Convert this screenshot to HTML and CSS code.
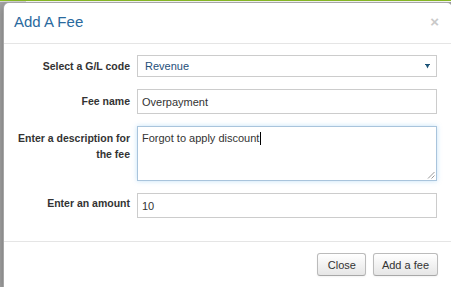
FILE: index.html
```html
<!DOCTYPE html>
<html>
<head>
<meta charset="utf-8">
<link rel="stylesheet" href="styles.css">
</head>
<body>
<div class="page">
  <div class="bg-top"></div>
  <div class="modal">
    <div class="modal-header">
      <h4 class="modal-title">Add A Fee</h4>
      <span class="close">×</span>
    </div>
    <div class="modal-body">
      <label class="lbl lbl-select">Select a G/L code</label>
      <div class="select">
        <span class="select-text">Revenue</span>
        <svg class="caret" width="5" height="5" viewBox="0 0 5 5"><path d="M0 0H5V1H4.2L2.5 4.5L0.8 1H0Z" fill="#1d5478"/></svg>
      </div>
      <label class="lbl">Fee name</label>
      <input class="input" type="text" value="Overpayment">
      <label class="lbl">Enter a description for the fee</label>
      <div class="textarea"><span>Forgot to apply discount</span><span class="cursor"></span>
        <svg class="grip" width="8" height="8" viewBox="0 0 8 8"><path d="M7.5 1L1 7.5M7.5 4.5L4.5 7.5" stroke="#999" stroke-width="1" fill="none"/></svg>
      </div>
      <label class="lbl lbl-amount">Enter an amount</label>
      <input class="input" type="text" value="10">
    </div>
    <div class="modal-footer">
      <button class="btn btn-close">Close</button>
      <button class="btn">Add a fee</button>
    </div>
  </div>
</div>
</body>
</html>
```
FILE: styles.css
```css
html, body {
  margin: 0;
  height: 100%;
  overflow: hidden;
}
body {
  background: #a3a3a3;
  font-family: "Liberation Sans", Arial, sans-serif;
  color: #333;
}
.page {
  height: 100%;
  display: flex;
  flex-direction: column;
}
.bg-top {
  height: 2px;
  flex: none;
  box-sizing: border-box;
  background: linear-gradient(90deg, #d9d9d9 0, #d9d9d9 26px, #fff 26px);
  border-top: 1px solid #8cbf26;
}
.modal {
  flex: 1;
  margin-left: 3px;
  width: 450px;
  box-sizing: border-box;
  background: #fff;
  border: 1px solid rgba(0, 0, 0, 0.35);
  border-bottom: none;
  border-radius: 6px 6px 0 0;
  box-shadow: 0 3px 9px rgba(0, 0, 0, 0.3);
}
.modal-header {
  display: flex;
  align-items: flex-start;
  padding: 9px 13px 11px 10px;
  border-bottom: 1px solid #e5e5e5;
}
.modal-title {
  margin: 0;
  font-size: 15px;
  line-height: 20px;
  font-weight: normal;
  color: #2a6a9e;
  flex: 1;
}
.close {
  font-size: 15px;
  line-height: 14px;
  font-weight: bold;
  color: #c9c9c9;
  margin-top: 3px;
}
.modal-body {
  display: grid;
  grid-template-columns: 116px 300px;
  column-gap: 7px;
  row-gap: 12px;
  padding: 11px 15px 23px 10px;
}
.lbl {
  text-align: right;
  font-size: 10.5px;
  font-weight: bold;
  line-height: 16px;
  padding-top: 4px;
  color: #333;
}
.lbl-select {
  padding-top: 3px;
}
.lbl-amount {
  padding-top: 2px;
}
.select {
  height: 22px;
  box-sizing: border-box;
  border: 1px solid #ccc;
  display: flex;
  align-items: center;
  padding: 0 6px 0 7px;
}
.select-text {
  flex: 1;
  font-size: 11px;
  color: #1e4e79;
}
.caret {
  display: block;
}
.input {
  height: 25px;
  box-sizing: border-box;
  border: 1px solid #ccc;
  padding: 0 4px;
  margin: 0;
  font-family: "Liberation Sans", Arial, sans-serif;
  font-size: 11px;
  color: #333;
  outline: none;
  border-radius: 0;
}
.textarea {
  height: 55px;
  box-sizing: border-box;
  border: 1px solid #a9c4dc;
  box-shadow: 0 0 5px rgba(82, 168, 236, 0.35);
  padding: 4px 4px;
  font-size: 11px;
  line-height: 14px;
  color: #333;
  position: relative;
}
.cursor {
  display: inline-block;
  width: 1px;
  height: 13px;
  background: #000;
  vertical-align: -3px;
  margin-left: 1px;
}
.grip {
  position: absolute;
  right: 1px;
  bottom: 1px;
}
.modal-footer {
  border-top: 1px solid #e5e5e5;
  display: flex;
  justify-content: flex-end;
  gap: 7px;
  padding: 11px 14px 11px 0;
}
.btn {
  height: 23px;
  margin: 0;
  padding: 0 8px;
  font-family: "Liberation Sans", Arial, sans-serif;
  font-size: 11px;
  color: #333;
  background: linear-gradient(#fff, #e6e6e6);
  border: 1px solid #bbb;
  border-bottom-color: #a8a8a8;
  border-radius: 3px;
  box-shadow: inset 0 1px 0 rgba(255, 255, 255, 0.2), 0 1px 2px rgba(0, 0, 0, 0.05);
}
.btn-close {
  padding: 0 9px 0 10px;
}
```
